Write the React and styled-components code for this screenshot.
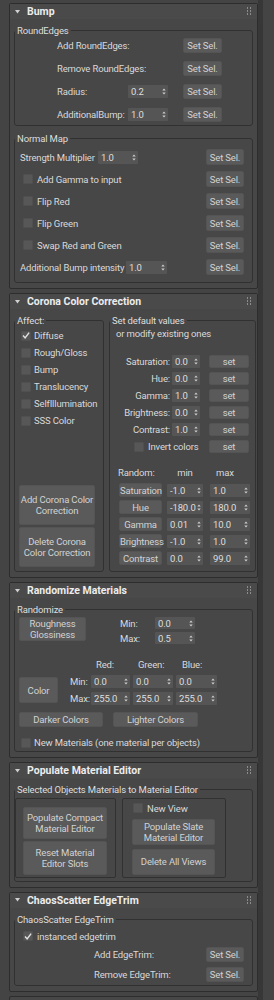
import React from "react";
import styled, { createGlobalStyle } from "styled-components";

const GlobalStyle = createGlobalStyle`
  * { box-sizing: border-box; }
  html, body { margin: 0; padding: 0; background: #444444; }
  body {
    font-family: Roboto, "Liberation Sans", Arial, sans-serif;
    font-size: 9.5px;
    letter-spacing: -0.15px;
    color: #d9d9d9;
  }
`;

const Page = styled.div`
  display: flex;
  width: 274px;
  height: 1000px;
  overflow: hidden;
  padding: 3px 0 0 9px;
  background: #444444;
`;

const Column = styled.div`
  width: 249px;
  flex: none;
  display: flex;
  flex-direction: column;
  gap: 4px;
`;

const ScrollGutter = styled.div`
  width: 5px;
  flex: none;
  margin-top: -3px;
  background: #373737;
`;

const RolloutBox = styled.section`
  flex: none;
  border: 1px solid #2d2d2d;
  border-radius: 2px;
  background: #474747;
  min-height: ${(p) => p.$minH || 0}px;
`;

const RolloutHeader = styled.div`
  height: 15px;
  display: flex;
  align-items: center;
  padding: 0 5px;
  background: #4a4a4a;
  font-weight: 700;
  font-size: 10.5px;
  letter-spacing: 0;
  color: #ececec;
`;

const HeaderTitle = styled.span`
  flex: 1;
  margin-left: 7px;
`;

const RolloutBody = styled.div`
  padding: 5px ${(p) => p.$padR ?? 4}px 5px 4px;
  display: flex;
  flex-direction: ${(p) => (p.$row ? "row" : "column")};
  gap: ${(p) => p.$gap ?? 6}px;
`;

const Group = styled.fieldset`
  margin: 0;
  padding: 0;
  border: 1px solid #313131;
  border-radius: 3px;
  min-width: 0;
  display: flex;
  flex-direction: column;
  ${(p) => (p.$w ? `width: ${p.$w}px; flex: none;` : "")}
  ${(p) => (p.$grow ? "flex: 1;" : "")}
`;

const Legend = styled.legend`
  padding: 0 2px;
  margin-left: 0;
  line-height: 13px;
  color: #dedede;
`;

const Content = styled.div`
  flex: ${(p) => (p.$fixed ? "none" : "1")};
  display: flex;
  flex-direction: column;
  padding: ${(p) => p.$pad || "0"};
  gap: ${(p) => p.$gap || 0}px;
  margin-top: ${(p) => p.$mt || 0}px;
`;

const Row = styled.div`
  display: flex;
  align-items: ${(p) => (p.$top ? "flex-start" : "center")};
  flex: none;
  height: ${(p) => p.$h || 15}px;
  margin-top: ${(p) => p.$mt || 0}px;
  padding-left: ${(p) => p.$pl || 0}px;
`;

const Label = styled.span`
  white-space: nowrap;
  ${(p) => (p.$w ? `width: ${p.$w}px; flex: none;` : "flex: 1;")}
  text-align: ${(p) => p.$align || "left"};
  margin-left: ${(p) => p.$ml || 0}px;
  padding-left: ${(p) => p.$pl || 0}px;
`;

const Spacer = styled.div`
  flex: 1;
`;

const Btn = styled.button`
  flex: none;
  width: ${(p) => p.$w}px;
  height: ${(p) => p.$h || 15}px;
  margin-left: ${(p) => p.$ml || 0}px;
  margin-top: ${(p) => p.$mt || 0}px;
  padding: 0;
  border: 1px solid #545454;
  border-radius: 2px;
  background: #5a5a5a;
  color: #d2d2d2;
  font: inherit;
  letter-spacing: inherit;
  line-height: 11px;
  text-align: center;
  white-space: nowrap;
  overflow: visible;
`;

const SpinField = styled.div`
  flex: none;
  width: ${(p) => p.$w}px;
  height: ${(p) => p.$h || 13}px;
  margin-left: ${(p) => p.$ml || 0}px;
  margin-right: ${(p) => p.$mr || 0}px;
  display: flex;
  align-items: center;
  padding: 0 2px 0 3px;
  background: #555555;
  border-radius: 1px;
  color: #dedede;
  overflow: hidden;
`;

const SpinText = styled.span`
  flex: 1;
  overflow: hidden;
  white-space: nowrap;
`;

const ArrowSvg = styled.svg`
  flex: none;
  width: 4px;
  height: 9px;
`;

function Spinner({ value, w, h, ml, mr }) {
  return (
    <SpinField $w={w} $h={h} $ml={ml} $mr={mr}>
      <SpinText>{value}</SpinText>
      <ArrowSvg viewBox="0 0 4 9">
        <polygon points="0.3,3.6 2,1.4 3.7,3.6" fill="#cfcfcf" />
        <polygon points="0.3,5.4 2,7.6 3.7,5.4" fill="#cfcfcf" />
      </ArrowSvg>
    </SpinField>
  );
}

const CheckBoxBox = styled.span`
  flex: none;
  width: 10px;
  height: 10px;
  background: #575757;
  border: 1px solid #505050;
  border-radius: 1px;
  display: inline-flex;
  align-items: center;
  justify-content: center;
`;

function CheckRow({ label, checked, ml = 0, gap = 4, h = 13, mt = 0 }) {
  return (
    <Row $h={h} $mt={mt} $pl={ml}>
      <CheckBoxBox>
        {checked && (
          <svg width="9" height="9" viewBox="0 0 9 9">
            <path d="M1.2 4.6 L3.5 7.2 L8 1.2" stroke="#e2e2e2" strokeWidth="1.6" fill="none" />
          </svg>
        )}
      </CheckBoxBox>
      <Label $ml={gap}>{label}</Label>
    </Row>
  );
}

const ColGrid = styled.div`
  display: grid;
  grid-template-columns: 39px 27px 39px 40px 41px;
  grid-template-rows: 13px 13px 13px;
  column-gap: 3px;
  row-gap: 4px;
  align-items: center;
  margin-top: 17px;
`;

const Cell = styled.div`
  grid-row: ${(p) => p.$row};
  grid-column: ${(p) => p.$col};
  padding-left: ${(p) => p.$pl || 0}px;
  white-space: nowrap;
  display: flex;
  align-items: center;
`;

const ColorBtn = styled(Btn)`
  grid-row: 2 / span 2;
  grid-column: 1;
  align-self: center;
`;

const SubPanels = styled.div`
  display: flex;
  gap: 6px;
`;

const SubPanel = styled.div`
  width: ${(p) => p.$w}px;
  height: 80px;
  border: 1px solid #313131;
  border-radius: 2px;
  display: flex;
  flex-direction: column;
  padding: ${(p) => p.$pad};
`;

const MinMax = styled.div`
  display: flex;
  flex-direction: column;
  gap: 3px;
  margin-left: 34px;
`;

const BottomButtons = styled.div`
  margin-top: auto;
  display: flex;
  flex-direction: column;
  gap: 2px;
`;

function Grip() {
  const dots = [];
  for (let r = 0; r < 3; r++)
    for (let c = 0; c < 2; c++)
      dots.push(<rect key={r + "-" + c} x={c * 3} y={r * 3} width="1" height="2" fill="#8c8c8c" />);
  return (
    <svg width="5" height="9" viewBox="0 0 5 9">
      {dots}
    </svg>
  );
}

function Rollout({ title, children, bodyProps }) {
  return (
    <RolloutBox>
      <RolloutHeader>
        <svg width="5" height="4" viewBox="0 0 5 4">
          <polygon points="0,0 5,0 2.5,3.5" fill="#d0d0d0" />
        </svg>
        <HeaderTitle>{title}</HeaderTitle>
        <Grip />
      </RolloutHeader>
      <RolloutBody {...bodyProps}>{children}</RolloutBody>
    </RolloutBox>
  );
}

function SetSel({ w = 39, h = 15 }) {
  return (
    <Btn $w={w} $h={h}>
      Set Sel.
    </Btn>
  );
}

function ValueRow({ label, value }) {
  return (
    <Row $h={13}>
      <Label $align="right">{label}</Label>
      <Spinner value={value} w={28} ml={2} />
      <Btn $w={40} $h={13} $ml={9}>
        set
      </Btn>
    </Row>
  );
}

function RandomRow({ label, min, max }) {
  return (
    <Row $h={14} $pl={8}>
      <Btn $w={43} $h={14}>
        {label}
      </Btn>
      <Spinner value={min} w={36} ml={5} />
      <Spinner value={max} w={40} ml={7} />
    </Row>
  );
}

export default function App() {
  return (
    <>
      <GlobalStyle />
      <Page>
        <Column>
          <Rollout title="Bump">
            <Group>
              <Legend>RoundEdges</Legend>
              <Content $pad="1px 30px 3px 42px" $gap={8}>
                <Row>
                  <Label>Add RoundEdges:</Label>
                  <SetSel />
                </Row>
                <Row>
                  <Label>Remove RoundEdges:</Label>
                  <SetSel />
                </Row>
                <Row>
                  <Label>Radius:</Label>
                  <Spinner value="0.2" w={40} mr={15} />
                  <SetSel />
                </Row>
                <Row>
                  <Label>AdditionalBump:</Label>
                  <Spinner value="1.0" w={40} mr={15} />
                  <SetSel />
                </Row>
              </Content>
            </Group>
            <Group>
              <Legend>Normal Map</Legend>
              <Content $pad="4px 8px 7px 5px" $gap={6}>
                <Row $h={16}>
                  <Label $w={78}>Strength Multiplier</Label>
                  <Spinner value="1.0" w={40} />
                  <Spacer />
                  <SetSel w={38} h={16} />
                </Row>
                {["Add Gamma to input", "Flip Red", "Flip Green", "Swap Red and Green"].map((t) => (
                  <Row $h={16} key={t}>
                    <CheckRow label={t} ml={3} />
                    <Spacer />
                    <SetSel w={38} h={16} />
                  </Row>
                ))}
                <Row $h={16}>
                  <Label $w={106}>Additional Bump intensity</Label>
                  <Spinner value="1.0" w={41} />
                  <Spacer />
                  <SetSel w={38} h={16} />
                </Row>
              </Content>
            </Group>
          </Rollout>

          <Rollout title="Corona Color Correction" bodyProps={{ $row: true, $gap: 5, $padR: 1 }}>
            <Group $w={90}>
              <Legend>Affect:</Legend>
              <Content $pad="0 7px 4px 4px">
                <CheckRow label="Diffuse" checked ml={2} gap={3} h={17} />
                <CheckRow label="Rough/Gloss" ml={2} gap={3} h={17} />
                <CheckRow label="Bump" ml={2} gap={3} h={17} />
                <CheckRow label="Translucency" ml={2} gap={3} h={17} />
                <CheckRow label="SelfIllumination" ml={2} gap={3} h={17} />
                <CheckRow label="SSS Color" ml={2} gap={3} h={17} />
                <BottomButtons>
                  <Btn $w={76} $h={40}>
                    Add Corona Color
                    <br />
                    Correction
                  </Btn>
                  <Btn $w={76} $h={40}>
                    Delete Corona
                    <br />
                    Color Correction
                  </Btn>
                </BottomButtons>
              </Content>
            </Group>
            <Group $grow>
              <Legend>Set default values</Legend>
              <Content $pad="0 6px 6px 1px">
                <Row $h={12} $pl={5}>
                  <Label>or modify existing ones</Label>
                </Row>
                <Content $fixed $gap={4} $mt={16}>
                  <ValueRow label="Saturation:" value="0.0" />
                  <ValueRow label="Hue:" value="0.0" />
                  <ValueRow label="Gamma:" value="1.0" />
                  <ValueRow label="Brightness:" value="0.0" />
                  <ValueRow label="Contrast:" value="1.0" />
                  <Row $h={13} $pl={23}>
                    <CheckBoxBox />
                    <Label $ml={4}>Invert colors</Label>
                    <Btn $w={40} $h={13}>
                      set
                    </Btn>
                  </Row>
                </Content>
                <Row $h={13} $mt={13} $pl={7}>
                  <Label $w={49}>Random:</Label>
                  <Label $w={36} $align="center">
                    min
                  </Label>
                  <Label $w={40} $ml={7} $pl={6}>
                    max
                  </Label>
                </Row>
                <Content $fixed $gap={3} $mt={4}>
                  <RandomRow label="Saturation" min="-1.0" max="1.0" />
                  <RandomRow label="Hue" min="-180.0" max="180.0" />
                  <RandomRow label="Gamma" min="0.01" max="10.0" />
                  <RandomRow label="Brightness" min="-1.0" max="1.0" />
                  <RandomRow label="Contrast" min="0.0" max="99.0" />
                </Content>
              </Content>
            </Group>
          </Rollout>

          <Rollout title="Randomize Materials">
            <Group>
              <Legend>Randomize</Legend>
              <Content $pad="1px 8px 2px 4px">
                <Row $h={24} $top>
                  <Btn $w={67} $h={24}>
                    Roughness
                    <br />
                    Glossiness
                  </Btn>
                  <MinMax>
                    <Row $h={12}>
                      <Label $w={35}>Min:</Label>
                      <Spinner value="0.0" w={40} h={12} />
                    </Row>
                    <Row $h={12}>
                      <Label $w={35}>Max:</Label>
                      <Spinner value="0.5" w={40} h={12} />
                    </Row>
                  </MinMax>
                </Row>
                <ColGrid>
                  <Cell $row={1} $col={3} $pl={5}>
                    Red:
                  </Cell>
                  <Cell $row={1} $col={4} $pl={5}>
                    Green:
                  </Cell>
                  <Cell $row={1} $col={5} $pl={6}>
                    Blue:
                  </Cell>
                  <ColorBtn $w={39} $h={26}>
                    Color
                  </ColorBtn>
                  <Cell $row={2} $col={2} $pl={9}>
                    Min:
                  </Cell>
                  <Cell $row={2} $col={3}>
                    <Spinner value="0.0" w={39} />
                  </Cell>
                  <Cell $row={2} $col={4}>
                    <Spinner value="0.0" w={40} />
                  </Cell>
                  <Cell $row={2} $col={5}>
                    <Spinner value="0.0" w={41} />
                  </Cell>
                  <Cell $row={3} $col={2} $pl={9}>
                    Max:
                  </Cell>
                  <Cell $row={3} $col={3}>
                    <Spinner value="255.0" w={39} />
                  </Cell>
                  <Cell $row={3} $col={4}>
                    <Spinner value="255.0" w={40} />
                  </Cell>
                  <Cell $row={3} $col={5}>
                    <Spinner value="255.0" w={41} />
                  </Cell>
                </ColGrid>
                <Row $h={15} $mt={7}>
                  <Btn $w={84}>Darker Colors</Btn>
                  <Btn $w={85} $ml={10}>
                    Lighter Colors
                  </Btn>
                </Row>
                <CheckRow label="New Materials (one material per objects)" ml={2} gap={3} mt={9} />
              </Content>
            </Group>
          </Rollout>

          <Rollout title="Populate Material Editor">
            <Group>
              <Legend>Selected Objects Materials to Material Editor</Legend>
              <Content $pad="1.5px 0 3px 0">
                <SubPanels>
                  <SubPanel $w={101} $pad="8px 0 0 7px">
                    <Btn $w={84} $h={32}>
                      Populate Compact
                      <br />
                      Material Editor
                    </Btn>
                    <Btn $w={84} $h={34} $mt={2}>
                      Reset Material
                      <br />
                      Editor Slots
                    </Btn>
                  </SubPanel>
                  <SubPanel $w={104} $pad="3px 0 0 10px">
                    <CheckRow label="New View" gap={4} />
                    <Btn $w={83} $h={26} $mt={4} $ml={-1}>
                      Populate Slate
                      <br />
                      Material Editor
                    </Btn>
                    <Btn $w={83} $h={26} $mt={4} $ml={-1}>
                      Delete All Views
                    </Btn>
                  </SubPanel>
                </SubPanels>
              </Content>
            </Group>
          </Rollout>

          <Rollout title="ChaosScatter EdgeTrim">
            <Group>
              <Legend>ChaosScatter EdgeTrim</Legend>
              <Content $pad="4px 8px 3px 0">
                <CheckRow label="instanced edgetrim" checked ml={8} gap={4} />
                <Row $mt={4}>
                  <Label $ml={79}>Add EdgeTrim:</Label>
                  <SetSel w={38} />
                </Row>
                <Row $mt={5}>
                  <Label $ml={79}>Remove EdgeTrim:</Label>
                  <SetSel w={38} />
                </Row>
              </Content>
            </Group>
          </Rollout>

          <RolloutBox $minH={30} />
        </Column>
        <ScrollGutter />
      </Page>
    </>
  );
}
